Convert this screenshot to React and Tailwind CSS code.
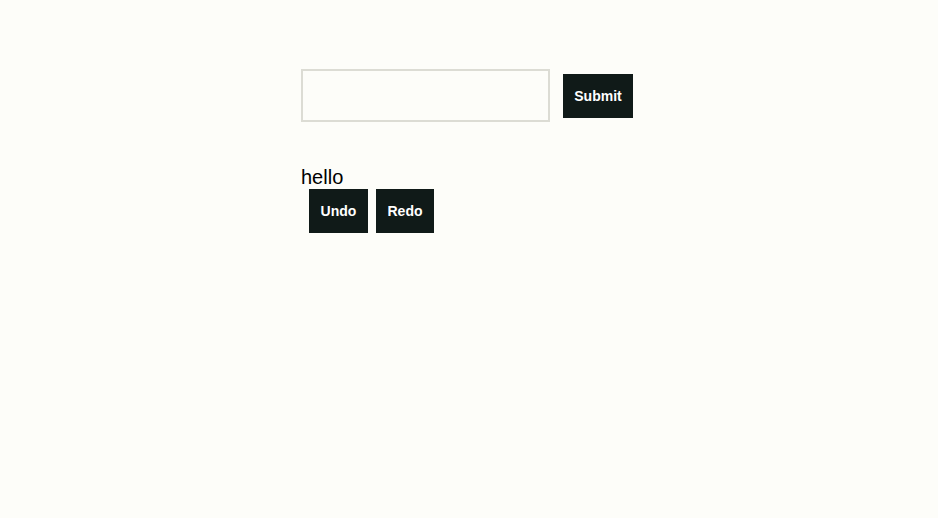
export default function App() {
  return (
    <div className="min-h-[518px] w-full bg-[#fdfdf9] pt-[69px]" style={{ fontFamily: '"Liberation Sans", Arial, sans-serif' }}>
      <div className="mx-auto w-[336px]">
        <form className="flex items-center gap-[13px]" onSubmit={(e) => e.preventDefault()}>
          <input type="text" className="h-[53px] w-[249px] border-2 border-[#dcdcd4] bg-transparent px-2 outline-none" />
          <button type="submit" className="mt-[1px] h-[44px] w-[70px] bg-[#101a18] text-[14px] font-bold text-white">Submit</button>
        </form>
        <div className="mt-[43px] text-[20px] leading-[24px] text-black">hello</div>
        <div className="ml-[8px] flex gap-[8px]">
          <button className="h-[44px] w-[59px] bg-[#101a18] text-[14px] font-bold text-white">Undo</button>
          <button className="h-[44px] w-[58px] bg-[#101a18] text-[14px] font-bold text-white">Redo</button>
        </div>
      </div>
    </div>
  );
}
